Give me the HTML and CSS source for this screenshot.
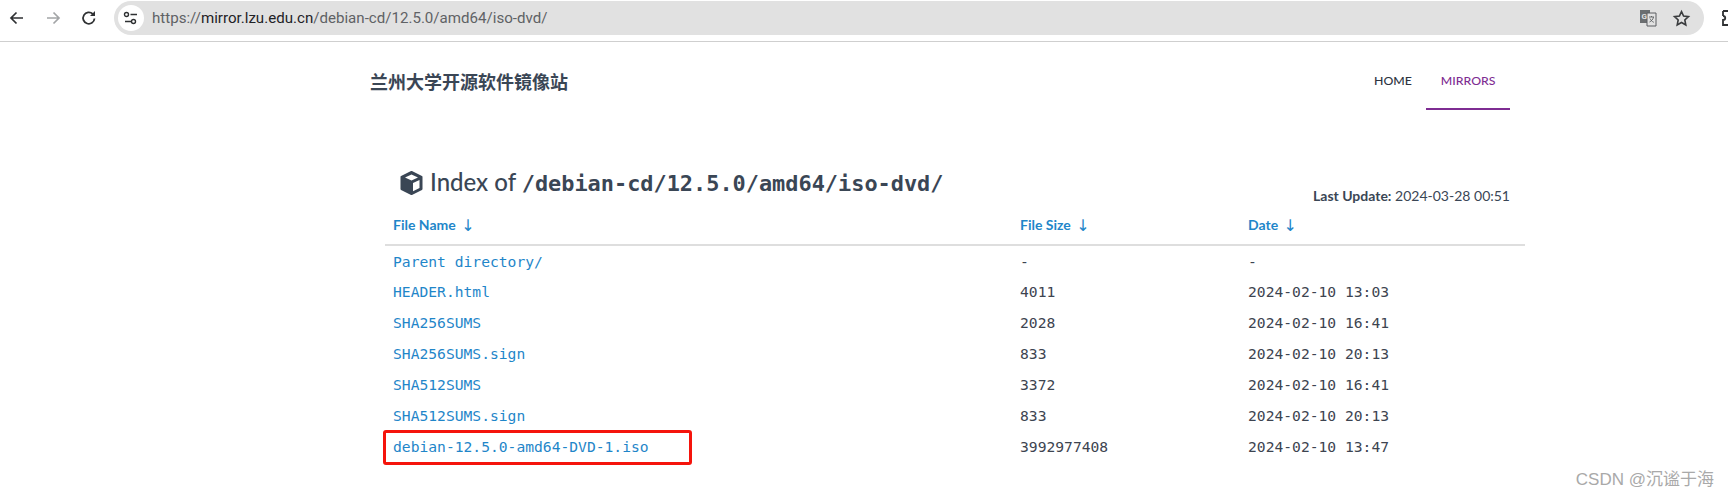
FILE: index.html
```html
<!DOCTYPE html>
<html lang="en">
<head>
    <meta charset="UTF-8">
    <meta name="viewport" content="width=device-width, initial-scale=1.0">
    <title>Index of /debian-cd/12.5.0/amd64/iso-dvd/</title>
    <link rel="stylesheet" href="styles.css">
</head>
<body>
    <div class="toolbar">
        <svg class="tool-icon" viewBox="0 0 20 20"><path d="M16 10H4.500M9.500 4.500 4 10l5.500 5.500" fill="none" stroke="#2f3133" stroke-width="1.700"/></svg>
        <svg class="tool-icon" viewBox="0 0 20 20"><path d="M4 10h11.500M10.500 4.500 16 10l-5.500 5.500" fill="none" stroke="#a3a5a7" stroke-width="1.700"/></svg>
        <svg class="tool-icon" viewBox="0 0 20 20"><path d="M15.500 10.500a5.700 5.700 0 1 1-1.700-4.500" fill="none" stroke="#2f3133" stroke-width="1.800"/><path d="M16 3v5h-5z" fill="#2f3133"/></svg>
        <div class="address-bar">
            <span class="site-info">
                <svg viewBox="0 0 16 16"><path d="M2 11.500h6M7.500 4.500H14" stroke="#2f3133" stroke-width="1.500" fill="none"/><circle cx="10.500" cy="11.500" r="2" fill="none" stroke="#2f3133" stroke-width="1.400"/><circle cx="3.500" cy="4.500" r="2" fill="none" stroke="#2f3133" stroke-width="1.400"/></svg>
            </span>
            <span class="url">https://<b>mirror.lzu.edu.cn</b>/debian-cd/12.5.0/amd64/iso-dvd/</span>
            <svg class="translate-icon" viewBox="0 0 18 18"><rect x="1" y="1" width="10" height="13" fill="#6b6e70"/><path d="M8 4h9v13H8z" fill="#e2e2e2" stroke="#5a5d60"/><text x="2.500" y="10" class="translate-g">G</text><path d="M10 8h5M12.500 7v1M14.500 8c-.500 2.500-2 4-4 5M11 9.500c.800 1.700 2 3 3.800 3.800" fill="none" stroke="#5a5d60" stroke-width=".9"/></svg>
            <svg class="star-icon" viewBox="0 0 20 20"><path d="m10 2.800 2.200 4.700 5.100.6-3.800 3.500 1 5.100L10 14.200l-4.500 2.500 1-5.100-3.800-3.500 5.100-.6z" fill="none" stroke="#3a3c3e" stroke-width="1.700"/></svg>
        </div>
        <svg class="extension-icon" viewBox="0 0 20 20"><path d="M2 3h8v3.500M2 3v5M2 8c3 0 3 4 0 4v5h8" fill="none" stroke="#2f3133" stroke-width="1.800"/></svg>
    </div>

    <div class="page">
        <header class="site-header">
            <a href="#" class="site-title">兰州大学开源软件镜像站</a>
            <nav class="site-nav">
                <a href="#">HOME</a>
                <a href="#" class="active">MIRRORS</a>
            </nav>
        </header>

        <section class="listing">
            <div class="listing-head">
                <h1><svg class="cube-icon" viewBox="0 0 24 26"><path d="M12 2 22 7v12l-10 5-10-5V7z" fill="#3a4655" stroke="#3a4655" stroke-width="2" stroke-linejoin="round"/><path d="M5.500 7.500 12 4.500l6.500 3L12 10.500z" fill="#fff"/><path d="M13.500 13 20 10v8l-6.500 3.200z" fill="#fff"/></svg>Index of <code>/debian-cd/12.5.0/amd64/iso-dvd/</code></h1>
                <p class="last-update"><strong>Last Update:</strong> 2024-03-28 00:51</p>
            </div>

            <table class="file-table">
                <thead>
                    <tr>
                        <th class="col-name"><a href="#">File Name <span class="arrow">↓</span></a></th>
                        <th class="col-size"><a href="#">File Size <span class="arrow">↓</span></a></th>
                        <th class="col-date"><a href="#">Date <span class="arrow">↓</span></a></th>
                    </tr>
                </thead>
                <tbody>
                    <tr><td><a href="#">Parent directory/</a></td><td>-</td><td>-</td></tr>
                    <tr><td><a href="#">HEADER.html</a></td><td>4011</td><td>2024-02-10 13:03</td></tr>
                    <tr><td><a href="#">SHA256SUMS</a></td><td>2028</td><td>2024-02-10 16:41</td></tr>
                    <tr><td><a href="#">SHA256SUMS.sign</a></td><td>833</td><td>2024-02-10 20:13</td></tr>
                    <tr><td><a href="#">SHA512SUMS</a></td><td>3372</td><td>2024-02-10 16:41</td></tr>
                    <tr><td><a href="#">SHA512SUMS.sign</a></td><td>833</td><td>2024-02-10 20:13</td></tr>
                    <tr><td class="marked"><a href="#">debian-12.5.0-amd64-DVD-1.iso</a></td><td>3992977408</td><td>2024-02-10 13:47</td></tr>
                </tbody>
            </table>
        </section>
    </div>

    <div class="watermark">CSDN @沉谧于海</div>
</body>
</html>
```

FILE: styles.css
```css
* {
    margin: 0;
    padding: 0;
    box-sizing: border-box;
}

html, body {
    height: 498px;
    overflow: hidden;
}

body {
    position: relative;
    background: white;
    color: #3a4655;
    font-family: Lato, "Noto Sans CJK SC", sans-serif;
}

a {
    text-decoration: none;
    color: #1f86c9;
}

/* browser chrome */
.toolbar {
    display: flex;
    align-items: center;
    height: 42px;
    padding: 1px 0 6px 7px;
    border-bottom: 1px solid #cfcfcf;
    overflow: hidden;
}

.tool-icon {
    width: 20px;
    height: 20px;
    margin-right: 16px;
    flex: none;
}

.address-bar {
    display: flex;
    align-items: center;
    flex: none;
    width: 1590px;
    height: 34px;
    margin-left: -1px;
    padding: 0 13px 0 4px;
    background: #e1e1e1;
    border-radius: 17px;
}

.site-info {
    display: flex;
    align-items: center;
    justify-content: center;
    width: 26px;
    height: 26px;
    margin-right: 8px;
    background: white;
    border-radius: 50%;
}

.site-info svg {
    width: 16px;
    height: 16px;
}

.url {
    flex: 1;
    font-family: Roboto, sans-serif;
    font-size: 15.100px;
    color: #5f6265;
}

.url b {
    font-weight: 400;
    color: #1f2226;
}

.translate-icon {
    width: 18px;
    height: 18px;
    margin-right: 15px;
}

.translate-g {
    font-family: Roboto, sans-serif;
    font-size: 8px;
    font-weight: 700;
    fill: #e2e2e2;
}

.star-icon {
    width: 19px;
    height: 19px;
}

.extension-icon {
    width: 20px;
    height: 20px;
    margin-left: 17px;
    flex: none;
}

/* page */
.page {
    width: 1155px;
    margin-left: 370px;
}

.site-header {
    display: flex;
    justify-content: space-between;
    height: 68px;
    width: 1140px;
}

.site-title {
    margin-top: 28px;
    font-size: 18px;
    line-height: 24px;
    font-weight: 700;
    color: #3a4655;
}

.site-nav {
    display: flex;
    height: 68px;
}

.site-nav a {
    padding: 29px 14.500px 0;
    font-size: 12.300px;
    line-height: 20px;
    font-weight: 500;
    color: #2c3340;
}

.site-nav .active {
    color: #7e2c92;
    border-bottom: 2px solid #7e2c92;
}

.listing {
    margin: 52px 0 0 15px;
    width: 1140px;
}

.listing-head {
    display: flex;
    justify-content: space-between;
    align-items: flex-end;
    height: 44px;
    padding: 0 15px 0 14px;
}

.listing-head h1 {
    font-size: 24px;
    line-height: 28px;
    font-weight: 500;
    margin-bottom: 8px;
}

.listing-head code {
    font-family: "DejaVu Sans Mono", monospace;
    font-size: 21.900px;
    font-weight: 700;
}

.cube-icon {
    width: 25px;
    height: 26px;
    margin-right: 6px;
    vertical-align: -5px;
}

.last-update {
    font-size: 14px;
    line-height: 18px;
    margin-bottom: 1px;
}

.file-table {
    width: 100%;
    table-layout: fixed;
    border-collapse: collapse;
}

.file-table th {
    height: 39px;
    padding: 0 8px 1px;
    text-align: left;
    font-size: 14px;
    font-weight: 700;
    border-bottom: 2px solid #dedede;
}

.col-name {
    width: 627px;
}

.col-size {
    width: 228px;
}

.arrow {
    margin-left: 2px;
    font-family: "DejaVu Sans", sans-serif;
    font-size: 16px;
    line-height: 1;
    font-weight: 400;
    vertical-align: -1px;
}

.file-table td {
    height: 31px;
    padding: 0 8px;
    font-family: "DejaVu Sans Mono", monospace;
    font-size: 14.650px;
    color: #3d4450;
}

.file-table td a {
    color: #1f86c9;
}

.marked {
    position: relative;
}

/* red box drawn over the last file name */
.marked::after {
    content: "";
    position: absolute;
    left: -2px;
    top: -1px;
    width: 303px;
    height: 29px;
    border: 3px solid #f5140c;
    border-radius: 3px;
}

.watermark {
    position: absolute;
    right: 14px;
    bottom: 8px;
    font-family: "Liberation Sans", "Noto Sans CJK SC", sans-serif;
    font-size: 17px;
    line-height: 20px;
    color: #a9a9a9;
}
```
